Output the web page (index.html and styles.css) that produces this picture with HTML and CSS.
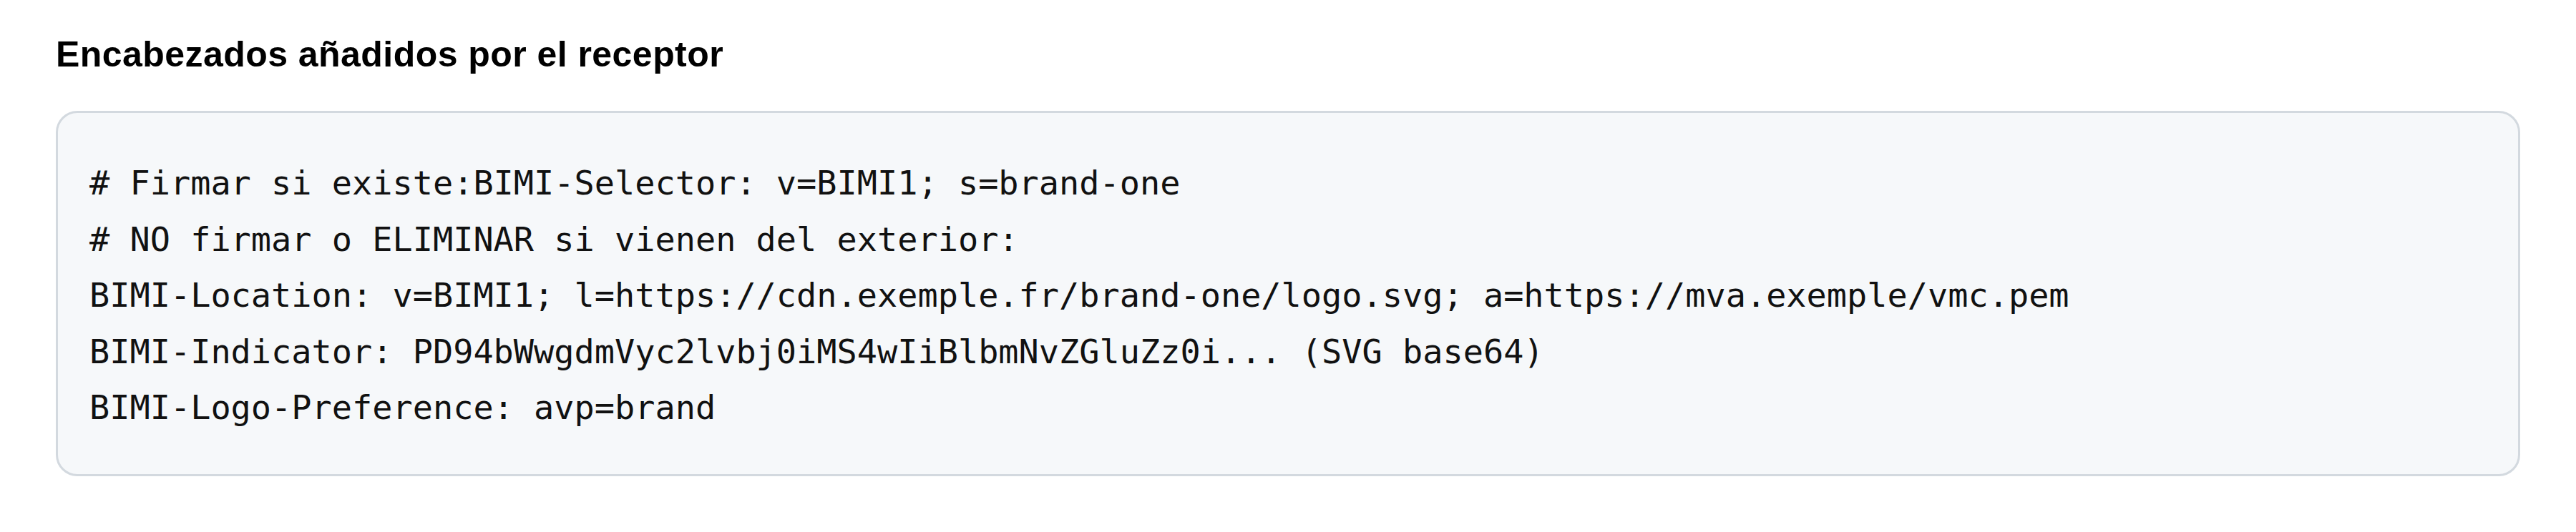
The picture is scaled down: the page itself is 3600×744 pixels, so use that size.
FILE: index.html
```html
<!DOCTYPE html>
<html lang="es">
<head>
<meta charset="utf-8">
<title>Encabezados añadidos por el receptor</title>
<link rel="stylesheet" href="styles.css">
</head>
<body>
<section class="section">
<h3 class="title">Encabezados añadidos por el receptor</h3>
<pre class="code"># Firmar si existe:BIMI-Selector: v=BIMI1; s=brand-one
# NO firmar o ELIMINAR si vienen del exterior:
BIMI-Location: v=BIMI1; l=https://cdn.exemple.fr/brand-one/logo.svg; a=https://mva.exemple/vmc.pem
BIMI-Indicator: PD94bWwgdmVyc2lvbj0iMS4wIiBlbmNvZGluZz0i... (SVG base64)
BIMI-Logo-Preference: avp=brand</pre>
</section>
</body>
</html>
```
FILE: styles.css
```css
html, body {
  margin: 0;
  padding: 0;
  background: #ffffff;
}
.section {
  padding: 46px 78px 0 78px;
}
.title {
  margin: 0 0 49px 0;
  font-family: "Liberation Sans", Arial, sans-serif;
  font-weight: 700;
  font-size: 50px;
  line-height: 60px;
  letter-spacing: 0.45px;
  color: #000000;
}
.code {
  margin: 0;
  background: #f6f8fa;
  border: 3px solid #d3d9df;
  border-radius: 30px;
  padding: 59px 43px 53px 44px;
  font-family: "DejaVu Sans Mono", "Liberation Mono", monospace;
  font-size: 46.9px;
  line-height: 78.5px;
  color: #111111;
  white-space: pre;
}
```
